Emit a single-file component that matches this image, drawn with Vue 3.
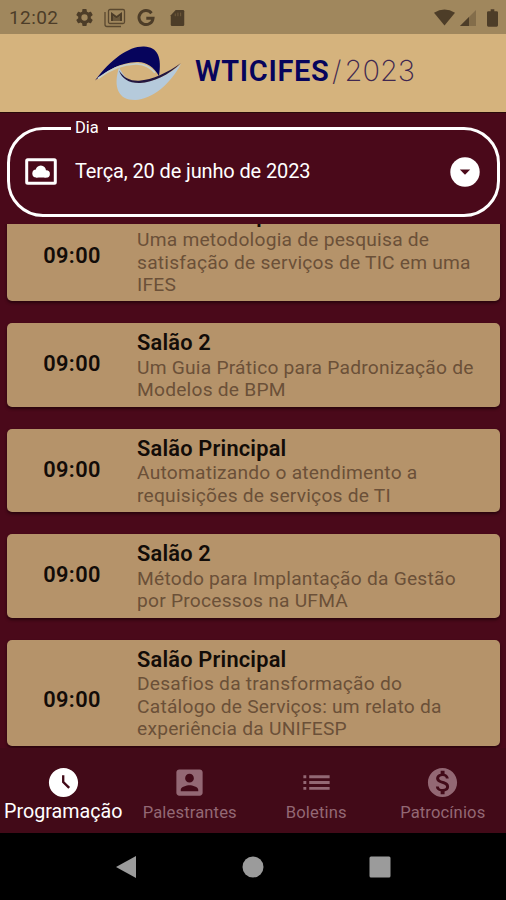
<script setup>
const sessions = [
  { time: '09:00', room: 'Salão Principal', lines: ['Uma metodologia de pesquisa de', 'satisfação de serviços de TIC em uma', 'IFES'] },
  { time: '09:00', room: 'Salão 2', lines: ['Um Guia Prático para Padronização de', 'Modelos de BPM'] },
  { time: '09:00', room: 'Salão Principal', lines: ['Automatizando o atendimento a', 'requisições de serviços de TI'] },
  { time: '09:00', room: 'Salão 2', lines: ['Método para Implantação da Gestão', 'por Processos na UFMA'] },
  { time: '09:00', room: 'Salão Principal', lines: ['Desafios da transformação do', 'Catálogo de Serviços: um relato da', 'experiência da UNIFESP'] },
]

const tabs = [
  { label: 'Programação', active: true, icon: 'M12 2C6.5 2 2 6.5 2 12s4.5 10 10 10 10-4.500 10-10S17.500 2 12 2zm3.300 14.200L11 12V7h1.600v4.300l3.900 3.700z' },
  { label: 'Palestrantes', icon: 'M3 5v14c0 1.100.89 2 2 2h14c1.100 0 2-.9 2-2V5c0-1.100-.9-2-2-2H5c-1.110 0-2 .9-2 2zm12 4c0 1.660-1.340 3-3 3s-3-1.340-3-3 1.340-3 3-3 3 1.340 3 3zm-9 8c0-2 4-3.100 6-3.100s6 1.100 6 3.100v1H6v-1z' },
  { label: 'Boletins', icon: 'M3 13h2v-2H3v2zm0 4h2v-2H3v2zm0-8h2V7H3v2zm4 4h14v-2H7v2zm0 4h14v-2H7v2zM7 7v2h14V7H7z' },
  { label: 'Patrocínios', icon: 'M12 2C6.480 2 2 6.480 2 12s4.480 10 10 10 10-4.480 10-10S17.520 2 12 2zm1.410 16.090V20h-2.670v-1.930c-1.710-.36-3.160-1.460-3.270-3.400h1.960c.1 1.050.82 1.870 2.650 1.870 1.960 0 2.400-.98 2.400-1.590 0-.83-.44-1.610-2.670-2.140-2.480-.6-4.180-1.620-4.180-3.670 0-1.720 1.390-2.840 3.110-3.210V4h2.670v1.950c1.860.45 2.790 1.860 2.850 3.390H14.300c-.05-1.110-.64-1.870-2.220-1.870-1.500 0-2.400.68-2.400 1.640 0 .84.65 1.390 2.670 1.910s4.180 1.390 4.180 3.910c-.01 1.830-1.380 2.830-3.120 3.160z' },
]
</script>

<template>
  <div class="phone">
    <header class="status">
      <span class="clock">12:02</span>
      <svg class="s-gear" viewBox="0 0 24 24"><path d="M19.140 12.940c.04-.3.06-.61.06-.94 0-.32-.02-.64-.07-.94l2.030-1.580a.49.49 0 0 0 .12-.61l-1.920-3.320a.488.488 0 0 0-.59-.22l-2.390.96c-.5-.38-1.030-.7-1.620-.94l-.36-2.540a.484.484 0 0 0-.48-.41h-3.840c-.24 0-.43.17-.47.41l-.36 2.540c-.59.24-1.130.57-1.620.94l-2.390-.96c-.22-.08-.47 0-.59.22L2.740 8.870c-.12.21-.08.47.12.61l2.030 1.580c-.05.3-.09.63-.09.94s.02.64.07.94l-2.030 1.580a.49.49 0 0 0-.12.61l1.920 3.320c.12.22.37.29.59.22l2.390-.96c.5.38 1.030.7 1.620.94l.36 2.540c.05.24.24.41.48.41h3.840c.24 0 .44-.17.47-.41l.36-2.540c.59-.24 1.130-.56 1.620-.94l2.390.96c.22.08.47 0 .59-.22l1.920-3.320c.12-.22.07-.47-.12-.61l-2.010-1.580zM12 15.600A3.600 3.600 0 1 1 12 8.400a3.600 3.600 0 0 1 0 7.200z" /></svg>
      <svg class="s-mail" viewBox="0 0 22 20"><path d="M1 4v12.500q0 2 2 2h14" fill="none" stroke="#5a482f" stroke-width="1.300" /><rect x="4.500" y="1.500" width="16" height="14" rx="1.500" fill="none" stroke="#5a482f" stroke-width="1.300" /><path d="M7 4l5.500 4L18 4v9h-2V8l-3.500 2.600L9 8v5H7z" /><path d="M9 8v5h7V8l-3.500 2.600z" opacity=".65" /></svg>
      <svg class="s-google" viewBox="0 0 20 20"><path d="M15.500 5.200A7 7 0 1 0 17 10.300h-6.700" fill="none" stroke="#4d3d28" stroke-width="3" /></svg>
      <svg class="s-card" viewBox="0 0 16 20"><path d="M6 1h8q1.500 0 1.500 1.500v15q0 1.500-1.500 1.500H2q-1.500 0-1.500-1.500V7z" /><path d="M5.500 5v3M8.500 4v4M11.500 4v4" stroke="#75603f" stroke-width="1" /></svg>
      <span class="spring"></span>
      <svg class="s-wifi" viewBox="0 0 22 17"><path d="M0 3.500Q11-3.500 22 3.500L11 17z" /></svg>
      <svg class="s-signal" viewBox="0 0 16 16"><path d="M16 0v16H0z" opacity=".35" /><path d="M9 7v9H0z" /></svg>
      <svg class="s-battery" viewBox="0 0 12 19"><path d="M4 0h4v2h2.500Q12 2 12 3.500v14q0 1.500-1.500 1.500h-9Q0 19 0 17.500v-14Q0 2 1.500 2H4z" /></svg>
    </header>

    <div class="brand">
      <svg class="logo" viewBox="0 0 88 56">
        <path d="M24 22.500C18 42 23 55 40 55 58 54 75 39 86 19 74 30 58 37 45 37.700 35 38 29 32 24 22.500z" fill="#b5cadb" />
        <path d="M0 35.500C16 14 34 1 49 1.500c14 .5 18 11 15 29.500C59 22 51 16.500 42 17 25 17.500 13 25 0 35.500z" fill="#06045c" />
        <path d="M3 33.500C17 22.500 30 18.500 42 18.800c9 .4 14 4 18 9" fill="none" stroke="#c8d0c8" stroke-width="1.800" />
        <path d="M24 25.500C29 33 35 36 44 35.700 57 35 74 27 86 18 74 30 58 37.500 45 38 34 38.300 27 34 24 25.500z" fill="#221640" />
      </svg>
      <span class="word">WTICIFES</span><span class="slash">/</span><span class="year">2023</span>
    </div>

    <section class="day-area">
      <fieldset class="day">
        <legend>Dia</legend>
        <div class="day-row">
          <svg class="d-cloud" viewBox="0 0 32 27"><rect x="1.700" y="1.700" width="28.600" height="23.600" rx="1" fill="none" stroke="#fff" stroke-width="3" /><circle cx="11.300" cy="15.500" r="4" fill="#fff" /><circle cx="15.800" cy="12.800" r="5.200" fill="#fff" /><circle cx="21.300" cy="15.900" r="3.600" fill="#fff" /><rect x="11" y="14" width="10.500" height="5.500" fill="#fff" /></svg>
          <span class="date">Terça, 20 de junho de 2023</span>
          <svg class="d-arrow" viewBox="0 0 30 30"><circle cx="15" cy="15" r="14.700" fill="#fff" /><path d="M9.800 12.500h10.400L15 17.700z" fill="#4b0a1a" /></svg>
        </div>
      </fieldset>
    </section>

    <main class="list">
      <article v-for="(s, i) in sessions" :key="i" class="card" :class="{ tall: s.lines.length > 2 }">
        <div class="time">{{ s.time }}</div>
        <div class="info">
          <h2>{{ s.room }}</h2>
          <p v-for="l in s.lines" :key="l">{{ l }}</p>
        </div>
      </article>
    </main>

    <nav class="tabs">
      <div v-for="t in tabs" :key="t.label" class="tab" :class="{ active: t.active }">
        <svg viewBox="0 0 24 24"><path :d="t.icon" fill-rule="evenodd" /></svg>
        <span>{{ t.label }}</span>
      </div>
    </nav>

    <footer class="system">
      <svg viewBox="0 0 24 24"><path d="M22 1v22L2 12z" /></svg>
      <svg viewBox="0 0 24 24"><circle cx="12" cy="12" r="10.500" /></svg>
      <svg viewBox="0 0 24 24"><rect x="1.500" y="1.500" width="21" height="21" rx="1.500" /></svg>
    </footer>
  </div>
</template>

<style>
body { margin: 0; background: #000; }
</style>

<style scoped>
.phone { width: 506px; height: 900px; display: flex; flex-direction: column; overflow: hidden; background: #4a091a; font-family: Roboto, sans-serif; }
svg { display: block; flex: none; }
.status { box-sizing: border-box; height: 34px; flex: none; display: flex; align-items: center; padding: 1px 8px 0 9px; background: #a0875d; color: #4d3d28; fill: #4d3d28; }
.clock { width: 65px; font-size: 19px; letter-spacing: .4px; }
.s-gear { width: 21px; height: 21px; margin-right: 9px; }
.s-mail { width: 22px; height: 20px; margin-right: 10px; }
.s-google { width: 20px; height: 20px; margin-right: 14px; }
.s-card { width: 15px; height: 18px; }
.spring { flex: 1; }
.s-wifi { width: 21px; height: 17px; margin-right: 5px; }
.s-signal { width: 16px; height: 16px; margin-right: 11px; }
.s-battery { width: 11px; height: 18px; }
.brand { box-sizing: border-box; height: 79px; flex: none; display: flex; align-items: center; padding: 0 0 5px 95px; background: #d5b37d; border-bottom: 1px solid #2a0a0a; color: #07045c; white-space: nowrap; }
.logo { width: 88px; height: 56px; margin: 5px 12px 0 0; }
.word { width: 137px; font-size: 29px; font-weight: 600; letter-spacing: .65px; }
.slash { width: 12.500px; font-family: Inter, sans-serif; font-weight: 200; font-size: 28px; color: #3f2850; }
.year { font-family: Inter, sans-serif; font-weight: 200; font-size: 29px; color: #3f2850; }
.day-area { box-sizing: border-box; height: 111px; flex: none; padding: 6px 6px 0 7px; }
.day { box-sizing: border-box; height: 98px; margin: 0; padding: 0 17px 0 15px; border: 3px solid #fff; border-radius: 36px; color: #fff; }
.day legend { height: 18px; line-height: 18px; margin-left: 46px; padding: 0 9px 0 4px; font-size: 16.500px; }
.day-row { display: flex; align-items: center; height: 69px; }
.d-cloud { width: 32px; height: 27px; margin-right: 18px; }
.date { flex: 1; font-size: 20px; letter-spacing: -.13px; white-space: nowrap; margin-top: -1px; }
.d-arrow { width: 30px; height: 30px; }
.list { height: 524px; flex: none; box-sizing: border-box; overflow: hidden; display: flex; flex-direction: column; justify-content: flex-end; gap: 21.800px; padding: 0 6px 2.500px 7px; }
.card { flex: none; box-sizing: border-box; display: flex; align-items: center; padding: 8px 0 5.200px; border-radius: 5px; background: #b5936a; box-shadow: 0 2px 3px rgba(20, 0, 5, .6); }
.time { width: 130px; text-align: center; font-size: 21.800px; font-weight: 600; color: #120c08; letter-spacing: .35px; margin-top: -5px; }
.tall .time { margin-top: 11px; }
.info { white-space: nowrap; }
.info h2 { margin: 0 0 1.300px; font-size: 21.800px; line-height: 24.600px; font-weight: 600; color: #120c08; letter-spacing: .2px; }
.info p { margin: 0; font-size: 19.200px; line-height: 22.300px; color: #6b5038; letter-spacing: .23px; }
.tabs { height: 85px; flex: none; display: grid; grid-template-columns: repeat(4, 1fr); background: #420a18; }
.tab { display: flex; flex-direction: column; align-items: center; padding-top: 17px; color: #936874; fill: #936874; font-size: 16.600px; letter-spacing: .13px; }
.tab svg { width: 35px; height: 35px; }
.tab span { line-height: 25px; }
.tab.active { color: #fff; fill: #fff; font-size: 19.700px; letter-spacing: 0; }
.tab.active span { line-height: 23px; }
.system { flex: 1; display: flex; justify-content: center; gap: 103px; background: #000; fill: #9b9b9b; padding-top: 22px; }
.system svg { width: 24px; height: 24px; }
</style>
